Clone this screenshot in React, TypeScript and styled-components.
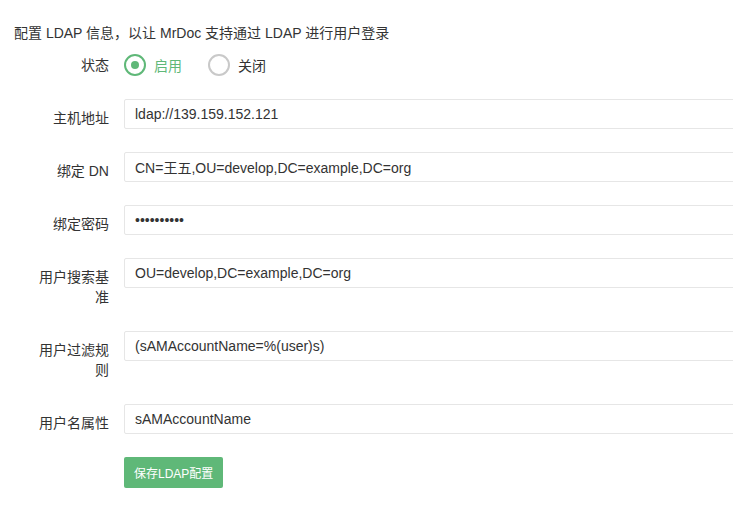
import React from 'react';
import styled, { createGlobalStyle } from 'styled-components';

const GlobalStyle = createGlobalStyle`
  html, body {
    margin: 0;
    padding: 0;
    background: #fff;
    overflow: hidden;
  }
  body {
    font-family: "Liberation Sans", Arial, "Noto Sans CJK SC", sans-serif;
    font-size: 14px;
    color: #333;
  }
`;

const Page = styled.div`
  box-sizing: border-box;
  width: 100vw;
  overflow: hidden;
  padding: 23px 0 0 14px;
`;

const Intro = styled.p`
  margin: 0 0 2px;
  line-height: 21px;
  font-size: 14px;
  color: #333;
`;

const FormItem = styled.div`
  display: flex;
  align-items: flex-start;
  margin-bottom: 15px;
`;

const Label = styled.label`
  width: 80px;
  flex: none;
  padding: 9px 15px;
  line-height: 20px;
  text-align: right;
  color: #333;
`;

const InputBlock = styled.div`
  flex: 1;
  min-width: 0;
  min-height: 38px;
  display: flex;
  align-items: flex-start;
`;

const Input = styled.input`
  box-sizing: border-box;
  flex: none;
  width: 700px;
  height: 30px;
  padding: 0 10px;
  border: 1px solid #e6e6e6;
  border-radius: 2px;
  font-family: "Liberation Sans", Arial, "Noto Sans CJK SC", sans-serif;
  font-size: 14px;
  color: #333;
  outline: none;
  background: #fff;
`;

const RadioGroup = styled.div`
  display: flex;
  align-items: center;
  height: 38px;
`;

const Radio = styled.div<{ $checked?: boolean }>`
  display: flex;
  align-items: center;
  gap: 8px;
  margin-right: 26px;
  color: ${p => (p.$checked ? '#5FB878' : '#333')};
  cursor: pointer;
`;

const Circle = styled.span<{ $checked?: boolean }>`
  box-sizing: border-box;
  width: 22px;
  height: 22px;
  border-radius: 50%;
  border: 2px solid ${p => (p.$checked ? '#5FB878' : '#c9c9c9')};
  display: flex;
  align-items: center;
  justify-content: center;
  &::after {
    content: '';
    display: ${p => (p.$checked ? 'block' : 'none')};
    width: 8px;
    height: 8px;
    border-radius: 50%;
    background: #5FB878;
  }
`;

const Button = styled.button`
  height: 31px;
  padding: 0 10px;
  border: none;
  border-radius: 2px;
  background: #5FB878;
  color: #fff;
  font-family: "Liberation Sans", Arial, "Noto Sans CJK SC", sans-serif;
  font-size: 12px;
  cursor: pointer;
`;

const fields = [
  { label: '主机地址', value: 'ldap://139.159.152.121' },
  { label: '绑定 DN', value: 'CN=王五,OU=develop,DC=example,DC=org' },
  { label: '绑定密码', value: 'ldappasswd', type: 'password' },
  { label: '用户搜索基准', value: 'OU=develop,DC=example,DC=org' },
  { label: '用户过滤规则', value: '(sAMAccountName=%(user)s)' },
  { label: '用户名属性', value: 'sAMAccountName' },
];

export default function App() {
  return (
    <Page>
      <GlobalStyle />
      <Intro>配置 LDAP 信息，以让 MrDoc 支持通过 LDAP 进行用户登录</Intro>

      <FormItem>
        <Label>状态</Label>
        <RadioGroup>
          <Radio $checked>
            <Circle $checked />
            启用
          </Radio>
          <Radio>
            <Circle />
            关闭
          </Radio>
        </RadioGroup>
      </FormItem>

      {fields.map(f => (
        <FormItem key={f.label}>
          <Label>{f.label}</Label>
          <InputBlock>
            <Input type={f.type || 'text'} defaultValue={f.value} readOnly />
          </InputBlock>
        </FormItem>
      ))}

      <FormItem>
        <Label />
        <InputBlock>
          <Button>保存LDAP配置</Button>
        </InputBlock>
      </FormItem>
    </Page>
  );
}
